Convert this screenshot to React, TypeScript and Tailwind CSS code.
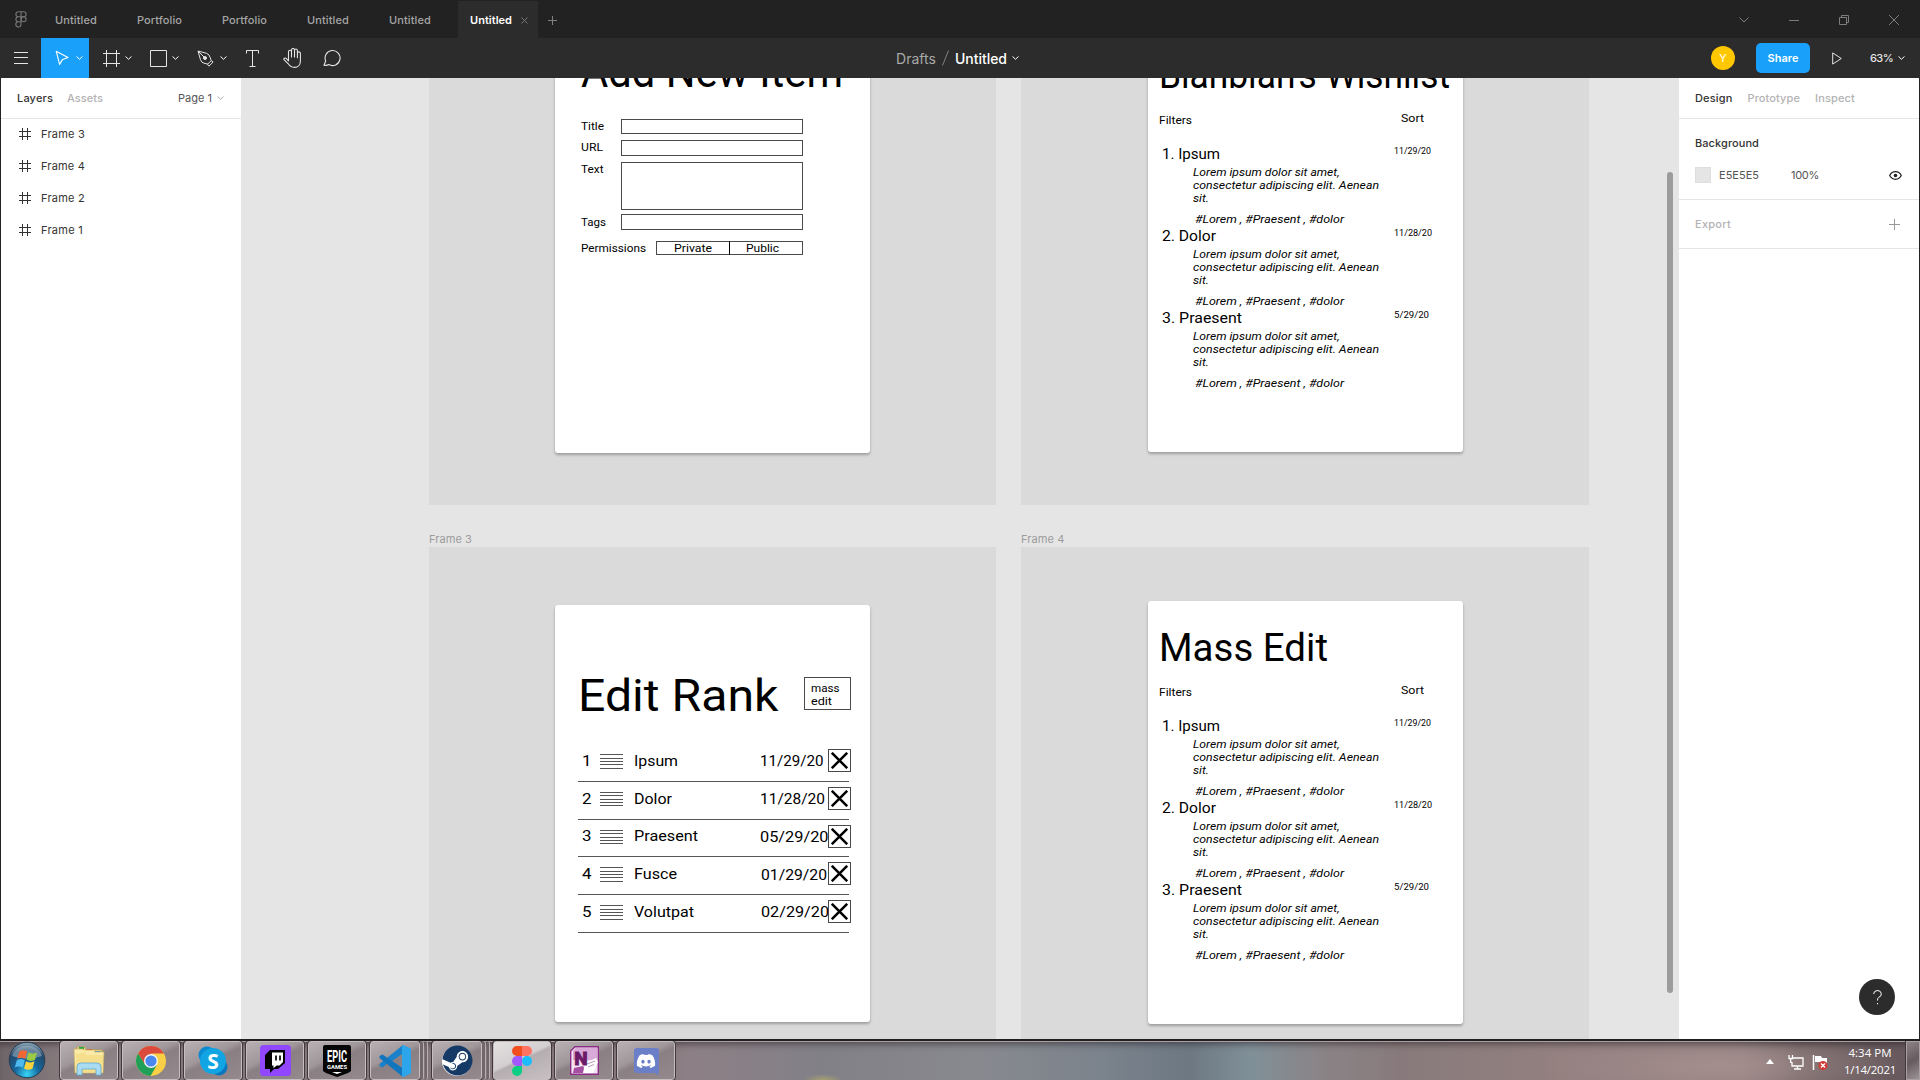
import React, { useLayoutEffect, useRef } from "react";
import { FaDiscord, FaSteam } from "react-icons/fa";

/** Text whose tracking is adjusted so that it spans exactly `w` pixels. */
function Fit({ w, className = "", children }: { w: number; className?: string; children: string }) {
  const ref = useRef<HTMLSpanElement>(null);
  useLayoutEffect(() => {
    const apply = () => {
      const el = ref.current;
      if (!el) return;
      el.style.letterSpacing = "0px";
      const natural = el.getBoundingClientRect().width;
      el.style.letterSpacing = `${(w - natural) / children.length}px`;
    };
    apply();
    document.fonts?.ready.then(apply);
  }, [w, children]);
  return (
    <span ref={ref} className={`inline-block whitespace-pre ${className}`}>
      {children}
    </span>
  );
}

/** Text whose glyphs are widened or narrowed so that it spans exactly `w` pixels. */
function Stretch({ w, children }: { w: number; children: string }) {
  const ref = useRef<HTMLSpanElement>(null);
  useLayoutEffect(() => {
    const apply = () => {
      const el = ref.current;
      if (!el) return;
      el.style.transform = "none";
      el.style.transform = `scaleX(${w / el.getBoundingClientRect().width})`;
    };
    apply();
    document.fonts?.ready.then(apply);
  }, [w, children]);
  return (
    <span ref={ref} className="inline-block origin-left whitespace-pre align-top">
      {children}
    </span>
  );
}

const CANVAS_X = 241;
const CANVAS_Y = 78;

/** A text node on the free canvas, placed by its left edge and baseline. */
function Node({ x, y, w, size, italic, children }: { x: number; y: number; w: number; size: number; italic?: boolean; children: string }) {
  return (
    <div
      className={`absolute font-['Roboto',sans-serif] leading-none text-black ${italic ? "italic" : ""}`}
      style={{ left: x - CANVAS_X, top: y - CANVAS_Y - size * 0.841 + 0.5, fontSize: size }}
    >
      <Stretch w={w}>{children}</Stretch>
    </div>
  );
}

function Box({ x, y, w, h, className = "" }: { x: number; y: number; w: number; h: number; className?: string }) {
  return <div className={`absolute ${className}`} style={{ left: x - CANVAS_X, top: y - CANVAS_Y, width: w, height: h }} />;
}

const CARD = "rounded-[3px] bg-white shadow-[0_2px_3px_rgba(0,0,0,0.28)]";
const OUTLINE = "border border-[#4a4a4a]";

const items = [
  { title: "1. Ipsum", tw: 58, date: "11/29/20", dw: 37 },
  { title: "2. Dolor", tw: 54, date: "11/28/20", dw: 38 },
  { title: "3. Praesent", tw: 80, date: "5/29/20", dw: 35 },
];

function Wishlist({ dy, heading, hw, hy }: { dy: number; heading: string; hw: number; hy: number }) {
  return (
    <>
      <Node x={1158.5} y={hy} w={hw} size={38}>{heading}</Node>
      <Node x={1159} y={124 + dy} w={33} size={11.5}>Filters</Node>
      <Node x={1400.5} y={121.7 + dy} w={23} size={11.5}>Sort</Node>
      {items.map((it, i) => {
        const o = dy + i * 82;
        return (
          <React.Fragment key={it.title}>
            <Node x={1161.5} y={159.5 + o} w={it.tw} size={15}>{it.title}</Node>
            <Node x={1393.5} y={153.7 + o} w={it.dw} size={8.3}>{it.date}</Node>
            <Node x={1192.5} y={176 + o} w={146.5} size={11.5} italic>Lorem ipsum dolor sit amet,</Node>
            <Node x={1192.5} y={189.3 + o} w={186} size={11.5} italic>consectetur adipiscing elit. Aenean</Node>
            <Node x={1192.5} y={202.6 + o} w={16} size={11.5} italic>sit.</Node>
            <Node x={1194.5} y={223.2 + o} w={149} size={11.5} italic>#Lorem , #Praesent , #dolor</Node>
          </React.Fragment>
        );
      })}
    </>
  );
}

const fields = [
  { label: "Title", w: 23, y: 130 },
  { label: "URL", w: 22, y: 151.3 },
  { label: "Text", w: 22.5, y: 173 },
  { label: "Tags", w: 25, y: 225.7 },
  { label: "Permissions", w: 65, y: 252 },
];

const ranks = [
  { name: "Ipsum", w: 44, date: "11/29/20", dx: 760, dw: 63.5 },
  { name: "Dolor", w: 38, date: "11/28/20", dx: 760, dw: 65 },
  { name: "Praesent", w: 64, date: "05/29/20", dx: 759.5, dw: 68.5 },
  { name: "Fusce", w: 43, date: "01/29/20", dx: 760.7, dw: 66 },
  { name: "Volutpat", w: 60, date: "02/29/20", dx: 760.7, dw: 68 },
];

function Canvas() {
  return (
    <main className="relative h-full w-[1438px] shrink-0 overflow-hidden bg-[#e5e5e5]">
      <Box x={429} y={60} w={567} h={445} className="bg-[#dadada]" />
      <Box x={1021} y={60} w={568} h={445} className="bg-[#dadada]" />
      <Box x={429} y={547} w={567} h={520} className="bg-[#dadada]" />
      <Box x={1021} y={547} w={568} h={520} className="bg-[#dadada]" />
      <div className="absolute left-[188px] top-[453px] font-['Inter',sans-serif] text-[11px] leading-4 text-[#9c9c9c]"><Fit w={43}>Frame 3</Fit></div>
      <div className="absolute left-[780px] top-[453px] font-['Inter',sans-serif] text-[11px] leading-4 text-[#9c9c9c]"><Fit w={43.5}>Frame 4</Fit></div>

      <Box x={555} y={40} w={315} h={413} className={CARD} />
      <Node x={581} y={86.7} w={262} size={45}>Add New Item</Node>
      {fields.map((f) => <Node key={f.label} x={581} y={f.y} w={f.w} size={11.5}>{f.label}</Node>)}
      <Box x={621} y={119} w={182} h={15} className={OUTLINE} />
      <Box x={621} y={140} w={182} h={16} className={OUTLINE} />
      <Box x={621} y={162} w={182} h={48} className={OUTLINE} />
      <Box x={621} y={214} w={182} h={16} className={OUTLINE} />
      <Box x={656} y={241} w={74} h={14} className={OUTLINE} />
      <Box x={729} y={241} w={74} h={14} className="border border-[#4a4a4a] border-l-black" />
      <Node x={673.5} y={252} w={38} size={11.5}>Private</Node>
      <Node x={745.5} y={252} w={33} size={11.5}>Public</Node>

      <Box x={1148} y={40} w={315} h={412} className={CARD} />
      <Wishlist dy={0} heading="Blahblah's Wishlist" hw={291} hy={87.3} />

      <Box x={555} y={605} w={315} h={417} className={CARD} />
      <Node x={577.5} y={710} w={200.5} size={45}>Edit Rank</Node>
      <Box x={804} y={677} w={47} h={33} className={OUTLINE} />
      <Node x={810.5} y={691.7} w={28.5} size={11.5}>mass</Node>
      <Node x={810.5} y={705} w={21} size={11.5}>edit</Node>
      {ranks.map((r, i) => {
        const o = i * 37.8;
        return (
          <React.Fragment key={r.name}>
            <Node x={582.3} y={766 + o} w={9.5} size={15}>{String(i + 1)}</Node>
            {[754, 757.5, 761, 764, 767.5].map((y) => (
              <Box key={y} x={600} y={Math.round(y + o)} w={23} h={1} className="bg-[#555]" />
            ))}
            <Node x={633.5} y={766 + o} w={r.w} size={15}>{r.name}</Node>
            <Node x={r.dx} y={766.3 + o} w={r.dw} size={15}>{r.date}</Node>
            <Box x={828} y={Math.round(749 + o)} w={23} h={23} className={OUTLINE} />
            <svg className="absolute h-[17px] w-[17px]" style={{ left: 831 - CANVAS_X, top: Math.round(752 + o) - CANVAS_Y }} viewBox="0 0 17 17" stroke="#000" strokeWidth="2.5">
              <path d="M0.8 0.8 16.2 16.2M16.2 0.8 0.8 16.2" />
            </svg>
            <Box x={578} y={Math.round(780.8 + o)} w={271} h={1} className="bg-[#555]" />
          </React.Fragment>
        );
      })}

      <Box x={1148} y={601} w={315} h={423} className={CARD} />
      <Wishlist dy={572} heading="Mass Edit" hw={169} hy={660.3} />

      <Box x={1667} y={172} w={6} h={821} className="rounded-full bg-[#9c9c9c]" />
    </main>
  );
}

function Chevron({ className = "" }: { className?: string }) {
  return (
    <svg className={`h-[4px] w-[7px] shrink-0 ${className}`} viewBox="0 0 7 4" fill="none" stroke="currentColor">
      <path d="M.5.4 3.5 3.3 6.5.4" />
    </svg>
  );
}

const tabs = [
  { label: "Untitled", w: 42, ml: "ml-[28px]" },
  { label: "Portfolio", w: 45, ml: "ml-[40px]" },
  { label: "Portfolio", w: 45, ml: "ml-[40px]" },
  { label: "Untitled", w: 42, ml: "ml-[40px]" },
  { label: "Untitled", w: 42, ml: "ml-[40px]" },
];

function TabBar() {
  return (
    <div className="flex h-[38px] items-center bg-[#222] pl-[15px] text-[11px] font-medium text-[#a5a5a5]">
      <svg className="h-[17px] w-[12px]" viewBox="0 0 12 17" fill="none" stroke="#777" strokeWidth="1.1">
        <path d="M6 .8H3.4a2.5 2.5 0 0 0 0 5H6zM6 .8h2.6a2.5 2.5 0 0 1 0 5H6M6 5.8H3.4a2.5 2.5 0 0 0 0 5H6zM6 10.8H3.4A2.6 2.6 0 1 0 6 13.5z" />
        <circle cx="8.6" cy="8.3" r="2.5" />
      </svg>
      {tabs.map((t, i) => (
        <div key={i} className={`flex pt-[3px] ${t.ml}`}><Fit w={t.w}>{t.label}</Fit></div>
      ))}
      <div className="ml-[27px] mt-px flex h-[37px] w-[80px] items-center bg-[#2c2c2c] pl-[12px] pt-[2px] font-semibold text-white">
        <Fit w={42}>Untitled</Fit>
        <svg className="ml-[9px] h-[7px] w-[7px]" viewBox="0 0 7 7" stroke="#777"><path d="M.5.5 6.5 6.5M6.5.5.5 6.5" /></svg>
      </div>
      <svg className="ml-[10px] mt-[3px] h-[9px] w-[9px]" viewBox="0 0 9 9" stroke="#808080"><path d="M4.5 0v9M0 4.5h9" /></svg>
      <div className="ml-auto flex items-center pr-[21px] pt-[2px] text-[#7d7d7d]">
        <svg className="h-[6px] w-[10px]" viewBox="0 0 10 6" fill="none" stroke="currentColor"><path d="M.5.5 5 5 9.5.5" /></svg>
        <svg className="ml-[40px] h-[3px] w-[10px]" viewBox="0 0 10 3" stroke="currentColor"><path d="M0 1.5h10" /></svg>
        <svg className="ml-[40px] h-[10px] w-[10px]" viewBox="0 0 10 10" fill="none" stroke="currentColor"><path d="M.5 2.5h7v7h-7zM2.5 2.5v-2h7v7h-2" /></svg>
        <svg className="ml-[40px] h-[10px] w-[10px]" viewBox="0 0 10 10" stroke="currentColor"><path d="M0 0 10 10M10 0 0 10" /></svg>
      </div>
    </div>
  );
}

function Toolbar() {
  return (
    <div className="flex h-10 items-center bg-[#2c2c2c] text-white">
      <svg className="ml-[14px] h-[12px] w-[14px]" viewBox="0 0 14 12" stroke="#e5e5e5"><path d="M0 .5h14M0 5.5h14M0 11.5h14" /></svg>
      <div className="ml-[13px] flex h-full w-[48px] items-center bg-[#18a0fb] pl-[14px]">
        <svg className="h-[16px] w-[14px]" viewBox="0 0 14 16" fill="none" stroke="#fff" strokeWidth="1.1" strokeLinejoin="round"><path d="M1.2 1.2 13 7.6 7.6 9.4 4.6 14.4z" /></svg>
        <Chevron className="ml-[7px]" />
      </div>
      <svg className="ml-[14px] h-[17px] w-[17px]" viewBox="0 0 17 17" stroke="#e5e5e5"><path d="M3.5 0v17M13.5 0v17M0 3.5h17M0 13.5h17" /></svg>
      <Chevron className="ml-[5px]" />
      <svg className="ml-[18px] h-[17px] w-[17px]" viewBox="0 0 17 17" fill="none" stroke="#e5e5e5"><path d="M.5.5h16v16H.5z" /></svg>
      <Chevron className="ml-[5px]" />
      <svg className="ml-[18px] h-[17px] w-[17px]" viewBox="0 0 17 17" fill="none" stroke="#e5e5e5" strokeLinejoin="round">
        <path d="M1 1 3.5 9.8Q4.3 13 8 13.5L10.8 14 14.2 10.6 13.3 7.8Q12.4 4.2 9.5 3.3zM1 1l6 6M10.4 14.2l1.5 2 4.2-4.2-1.9-1.5" /><circle cx="8" cy="8" r="1.5" fill="#e5e5e5" />
      </svg>
      <Chevron className="ml-[6px]" />
      <svg className="ml-[19px] h-[17px] w-[13px]" viewBox="0 0 13 17" fill="none" stroke="#e5e5e5"><path d="M.5 3.5v-3h12v3M6.5.5v16M3.5 16.5h6" /></svg>
      <svg className="ml-[24px] h-[20px] w-[19px]" viewBox="0 0 19 20" fill="none" stroke="#e5e5e5" strokeWidth="1.1" strokeLinejoin="round" strokeLinecap="round">
        <path d="M5.5 11V3.8a1.5 1.5 0 0 1 3 0V9 2a1.5 1.5 0 0 1 3 0v7-6.5a1.4 1.4 0 0 1 2.9 0V9.8 5.4a1.5 1.5 0 0 1 3 0V13c0 3.8-2.4 6.4-6 6.4-3 0-4.6-1.2-6.1-3.6L1 11.7c-.6-1.4 1-2.3 2.2-1.3L5.5 13z" />
      </svg>
      <svg className="ml-[21px] h-[18px] w-[18px]" viewBox="0 0 18 18" fill="none" stroke="#e5e5e5" strokeWidth="1.1" strokeLinejoin="round"><path d="M1 16.2 2.7 12A7.5 7.5 0 1 1 5.8 15.5Q3.5 16.8 1 16.2z" /></svg>

      <div className="ml-[555px] flex items-center text-[14px]">
        <Fit w={40} className="text-[#a8a8a8]">Drafts</Fit>
        <svg className="ml-[6px] h-[16px] w-[7px]" viewBox="0 0 7 16" stroke="#808080"><path d="M.5 15.5 6.5.5" /></svg>
        <Fit w={52} className="ml-[6px] font-medium">Untitled</Fit>
        <Chevron className="ml-[5px]" />
      </div>
      <div className="ml-auto flex items-center pr-[15px]">
        <div className="flex h-6 w-6 items-center justify-center rounded-full bg-[#ffc700] text-[11px]">Y</div>
        <div className="ml-[21px] flex h-[30px] w-[54px] items-center justify-center rounded-[5px] bg-[#18a0fb] text-[11px] font-semibold"><Fit w={31}>Share</Fit></div>
        <svg className="ml-[22px] h-[13px] w-[10px]" viewBox="0 0 10 13" fill="none" stroke="#e5e5e5" strokeLinejoin="round"><path d="M.7.9 9.3 6.5.7 12.1z" /></svg>
        <Fit w={23} className="ml-[28px] text-[11px] font-medium text-[#e5e5e5]">63%</Fit>
        <Chevron className="ml-[5px]" />
      </div>
    </div>
  );
}

function LeftPanel() {
  return (
    <aside className="h-full w-[240px] shrink-0 bg-white text-[11px] text-[#333]">
      <div className="flex h-[41px] items-center border-b border-[#e5e5e5] pl-[16px]">
        <Fit w={36} className="font-medium">Layers</Fit>
        <Fit w={36} className="ml-[14px] font-medium text-[#b3b3b3]">Assets</Fit>
        <Fit w={34} className="ml-[75px] text-[#555]">Page 1</Fit>
        <Chevron className="ml-[5px] text-[#aaa]" />
      </div>
      {["Frame 3", "Frame 4", "Frame 2", "Frame 1"].map((n, i) => (
        <div key={n} className={`flex h-8 items-center pl-[18px] ${i === 0 ? "-mt-px" : ""}`}>
          <svg className="h-[12px] w-[12px]" viewBox="0 0 12 12" stroke="#333"><path d="M3.5 0v12M8.5 0v12M0 3.5h12M0 8.5h12" /></svg>
          <Fit w={i === 3 ? 42 : 44} className="ml-[10px]">{n}</Fit>
        </div>
      ))}
    </aside>
  );
}

function RightPanel() {
  return (
    <aside className="relative h-full w-[240px] shrink-0 bg-white text-[11px] text-[#333]">
      <div className="flex h-[41px] items-center border-b border-[#e5e5e5] pl-[16px] font-medium">
        <Fit w={37.5}>Design</Fit>
        <Fit w={52.5} className="ml-[15px] text-[#b3b3b3]">Prototype</Fit>
        <Fit w={40} className="ml-[15px] text-[#b3b3b3]">Inspect</Fit>
      </div>
      <div className="flex h-[81px] flex-col border-b border-[#e5e5e5] pl-[16px] pr-[17px]">
        <div className="flex h-[48px] items-center"><Fit w={64} className="font-medium">Background</Fit></div>
        <div className="flex h-4 items-center text-[#555]">
          <div className="h-4 w-4 border border-[#dedede] bg-[#e5e5e5]" />
          <Fit w={40} className="ml-[8px]">E5E5E5</Fit>
          <Fit w={28} className="ml-[32px]">100%</Fit>
          <svg className="ml-auto h-[9px] w-[13px]" viewBox="0 0 13 9" fill="none" stroke="#222" strokeWidth="1.2"><path d="M.7 4.5C2 2 4 .7 6.5.7S11 2 12.3 4.5C11 7 9 8.3 6.5 8.3S2 7 .7 4.5z" /><circle cx="6.5" cy="4.5" r="1.8" fill="#222" stroke="none" /></svg>
        </div>
      </div>
      <div className="flex h-[49px] items-center justify-between border-b border-[#e5e5e5] pl-[16px] pr-[19px] font-medium text-[#b3b3b3]">
        <Fit w={36}>Export</Fit>
        <svg className="h-[11px] w-[11px]" viewBox="0 0 11 11" stroke="#999"><path d="M5.5 0v11M0 5.5h11" /></svg>
      </div>
      <div className="absolute left-[180px] top-[901px] flex h-9 w-9 items-center justify-center rounded-full bg-[#2c2c2c]">
        <svg className="h-[15px] w-[9px]" viewBox="0 0 9 15" fill="none" stroke="#fff"><path d="M.7 4A3.8 3.5 0 1 1 5.8 7.3Q4.5 8 4.5 10.500M4.5 13v1.3" /></svg>
      </div>
    </aside>
  );
}

const WindowsOrb = () => (
  <svg className="h-[38px] w-[38px]" viewBox="0 0 38 38">
    <defs>
      <radialGradient id="orb" cx="50%" cy="90%" r="85%"><stop offset="0" stopColor="#38d6f8" /><stop offset=".4" stopColor="#15679c" /><stop offset=".8" stopColor="#23486a" /><stop offset="1" stopColor="#7f9aac" /></radialGradient>
    </defs>
    <circle cx="19" cy="19" r="17.8" fill="url(#orb)" stroke="#273c50" />
    <path d="M4 15a15.5 14 0 0 1 30 0Q19 20 4 15z" fill="#c5d6e0" opacity=".42" />
    <path d="M11.2 10.5q4-2.6 8 .1l-2 7.4q-4-2.6-8-.2z" fill="#ee6734" />
    <path d="M20.5 11.5q4 2.3 8.5 0l-2 7.2q-4.5 2.5-8.5-.1z" fill="#9acb42" />
    <path d="M8.8 19.3q4-2.5 8 .2l-2 7.2q-4-2.5-8-.1z" fill="#4db9ee" />
    <path d="M18 20.2q4.2 2.4 8.5.1l-2 7.2q-4.3 2.4-8.5-.1z" fill="#fbd23c" />
  </svg>
);

const Folder = () => (
  <svg className="h-[30px] w-[34px]" viewBox="0 0 34 30">
    <path d="M5 1h8l1 3h16v20H5z" fill="#f3dd85" stroke="#bd9b44" strokeWidth=".7" />
    <path d="M7 1h5v2H7z" fill="#28a745" /><path d="M15 3h5v2h-5z" fill="#d3523d" /><path d="M23 5h6v2h-6z" fill="#4c9cdb" />
    <path d="M12 4h10l1 2h9l-1 21H3L2 3h9z" fill="#fbeaa8" stroke="#cdb05e" strokeWidth=".7" />
    <path d="M13 6l1 3h17v17H4V8z" fill="#f5df8c" />
    <path d="M5 29V21q0-4 4-4h16q4 0 4 4v8h-5v-6H10v6z" fill="#a9dcf2" stroke="#61a8cf" strokeWidth=".8" />
  </svg>
);

const Chrome = () => (
  <svg className="h-[30px] w-[30px]" viewBox="0 0 30 30">
    <circle cx="15" cy="15" r="15" fill="#f9cf46" />
    <path d="M2 7.5A15 15 0 0 1 28 7.5H15L9 18.5z" fill="#db4a3b" />
    <path d="M2 7.5A15 15 0 0 0 14.5 30L21 18.7 9 18.5z" fill="#1f9f58" />
    <circle cx="15" cy="15" r="7" fill="#f3f3f3" /><circle cx="15" cy="15" r="5.6" fill="#4a87ee" />
  </svg>
);

const Skype = () => (
  <svg className="h-[30px] w-[30px]" viewBox="0 0 30 30">
    <circle cx="9" cy="9" r="8.5" fill="#0a8ad0" /><circle cx="21" cy="21" r="8.5" fill="#0877bf" /><circle cx="15" cy="15" r="13" fill="#12a5e4" />
    <text x="15" y="22.5" textAnchor="middle" fontSize="21" fontWeight="700" fill="#fff" fontFamily="Open Sans, sans-serif">S</text>
  </svg>
);

const Twitch = () => (
  <svg className="h-[31px] w-[31px]" viewBox="0 0 31 31">
    <rect width="31" height="31" rx="3.5" fill="#9147ff" />
    <path d="M10 5h15v13l-7 6h-4l-4 4v-4H5V10z" fill="#000" /><path d="M12 7.5h11v9.5l-3.5 3.5h-3l-3 2.8v-2.8H12z" fill="#fff" />
    <path d="M16 10.5v5M20 10.5v5" stroke="#000" strokeWidth="1.7" />
  </svg>
);

const Epic = () => (
  <svg className="h-[32px] w-[28px]" viewBox="0 0 28 32">
    <path d="M2 0h24q2 0 2 2v24l-3 2-11 4-11-4-3-2V2q0-2 2-2z" fill="#050505" />
    <text x="14" y="17" textAnchor="middle" fontSize="17" fontWeight="700" fill="#fff" textLength="20" lengthAdjust="spacingAndGlyphs" fontFamily="Roboto, sans-serif">EPIC</text>
    <text x="14" y="23.5" textAnchor="middle" fontSize="5.5" fontWeight="700" fill="#fff" textLength="20" lengthAdjust="spacingAndGlyphs" fontFamily="Roboto, sans-serif">GAMES</text>
    <path d="M9 27h10l-5 2z" fill="#fff" />
  </svg>
);

const VSCode = () => (
  <svg className="h-[32px] w-[32px]" viewBox="0 0 32 32">
    <path d="M24 32 9 18l-5.5 4.5L.5 21v-2L24 0v8.5L13 16l11 7.5z" fill="#1a82ca" />
    <path d="M.5 11v2L24 32v-8.5L3.5 9.5z" fill="#1276be" />
    <path d="M24 0l8 3.5v25L24 32q-1.5 0-1-2V2q-.5-2 1-2z" fill="#2ca5ea" />
  </svg>
);

const Steam = () => (
  <div className="flex h-[30px] w-[30px] items-center justify-center rounded-full bg-white">
    <FaSteam className="h-[31px] w-[31px] shrink-0 text-[#153a66]" />
  </div>
);

const Figma = () => (
  <svg className="h-[30px] w-[20px]" viewBox="0 0 20 30">
    <path d="M10 0H5a5 5 0 0 0 0 10h5z" fill="#f24e1e" /><path d="M10 0h5a5 5 0 0 1 0 10h-5z" fill="#ff7262" />
    <path d="M10 10H5a5 5 0 0 0 0 10h5z" fill="#a259ff" /><circle cx="15" cy="15" r="5" fill="#1abcfe" /><path d="M10 20H5a5 5 0 1 0 5 5z" fill="#0acf83" />
  </svg>
);

const OneNote = () => (
  <svg className="h-[29px] w-[29px]" viewBox="0 0 29 29">
    <path d="M5 .7h23.3v27.6H.7V5z" fill="#f4e3f3" stroke="#8c2c86" strokeWidth="1.4" />
    <path d="M6 2h21v12H3V5z" fill="#d9a9d8" /><path d="M4 22l9-2 4 7H3z" fill="#a64fa2" /><path d="M15 17l11-5 2 4-5 11H13z" fill="#fff" /><path d="M17 18l8-3M18 21l6-2.5" stroke="#b99bb8" />
    <text x="11" y="19" textAnchor="middle" fontSize="19" fontWeight="900" fill="#6b1b68" stroke="#6b1b68" strokeWidth=".8" fontFamily="Roboto, sans-serif">N</text>
  </svg>
);

const Discord = () => (
  <div className="relative flex h-[25px] w-[25px] items-center justify-center rounded-[3px] bg-[#6b7fc8]">
    <div className="absolute -bottom-[3px] right-0 h-[8px] w-[8px] bg-[#6b7fc8] [clip-path:polygon(0_0,100%_0,100%_100%)]" />
    <FaDiscord className="h-[20px] w-[20px] text-white" />
  </div>
);

const apps = [
  { icon: <Folder />, cls: "ml-[14px] w-[58px]" },
  { icon: <Chrome />, cls: "ml-[4px] w-[58px]" },
  { icon: <Skype />, cls: "ml-[4px] w-[58px]" },
  { icon: <Twitch />, cls: "ml-[4px] w-[58px]" },
  { icon: <Epic />, cls: "ml-[4px] w-[58px]" },
  { icon: <VSCode />, cls: "ml-[4px] w-[50px]", stack: true },
  { icon: <Steam />, cls: "ml-[4px] w-[50px]", stack: true },
  { icon: <Figma />, cls: "ml-[3px] w-[58px]", active: true },
  { icon: <OneNote />, cls: "ml-[4px] w-[58px]" },
  { icon: <Discord />, cls: "ml-[4px] w-[58px]" },
];

function Taskbar() {
  return (
    <footer className="flex h-[41px] items-start overflow-hidden border-t-2 border-[#231f21] bg-[radial-gradient(ellipse_20px_6px_at_823px_39px,#a5a070,transparent),radial-gradient(ellipse_180px_40px_at_1720px_25px,#a58f8d,transparent),linear-gradient(90deg,#6e6568_0px,#85797c_60px,#847579_650px,#8d8086_690px,#828087_820px,#88898f_980px,#7b838c_1100px,#6d7883_1190px,#809098_1250px,#8a8487_1320px,#887a7c_1400px,#93807f_1560px,#8a7b7c_1740px,#6d5f62_1800px,#66585c_1920px)] shadow-[inset_0_1px_0_#a79fa2,inset_0_8px_7px_-5px_rgba(40,32,36,0.6)]">
      <div className="ml-[8px]"><WindowsOrb /></div>
      {apps.map((a, i) => (
        <React.Fragment key={i}>
          <div
            className={`flex h-[39px] shrink-0 items-center justify-center rounded-[3px] border border-[#c5bdc0] outline outline-1 outline-[#41383c] ${a.cls} ${
              a.active
                ? "bg-[linear-gradient(155deg,#e4e1e1_0%,#d3cfd0_45%,#b5aeb0_50%,#c7c1c3_100%)]"
                : "bg-[linear-gradient(155deg,#b8b0b3_0%,#a0979a_40%,#8a7f82_50%,#94898c_100%)]"
            }`}
          >
            {a.icon}
          </div>
          {a.stack && (
            <div className="flex h-[39px] shrink-0 gap-px">
              <div className="w-[4px] rounded-r-[3px] border-r border-[#b9b0b3] bg-[#71676b]" />
              <div className="w-[3px] rounded-r-[3px] border-r border-[#b9b0b3] bg-[#71676b]" />
            </div>
          )}
        </React.Fragment>
      ))}
      <div className="ml-auto flex h-[39px] items-center">
        <svg className="mt-[2px] h-[5px] w-[8px]" viewBox="0 0 8 5"><path d="M4 0 8 5H0z" fill="#fff" /></svg>
        <svg className="ml-[14px] mt-[3px] h-[15px] w-[16px]" viewBox="0 0 16 15" fill="none" stroke="#fff" strokeWidth="1.3">
          <path d="M5 3h10v8H4V7M6 14h7M9.5 11v3M1 0v3.5h3.5V0M2.7 3.5V8" />
        </svg>
        <svg className="ml-[8px] mt-[3px] h-[15px] w-[16px]" viewBox="0 0 16 15">
          <path d="M1.5 0v15" stroke="#fff" strokeWidth="1.5" /><path d="M3 1h6l1 2h5v6H9L8 7H3z" fill="#fff" />
          <circle cx="11" cy="10.5" r="4.5" fill="#d13b35" /><path d="M9 8.5l4 4M13 8.5l-4 4" stroke="#fff" strokeWidth="1.4" />
        </svg>
        <div className="ml-[15px] flex w-[54px] flex-col items-center font-['Open_Sans',sans-serif] text-[11.5px] leading-[17px] text-white">
          <Fit w={43}>4:34 PM</Fit>
          <Fit w={52}>1/14/2021</Fit>
        </div>
        <div className="ml-[9px] h-[39px] w-[14px] border border-[#aaa0a3] bg-[linear-gradient(150deg,#8d8386,#665b5f_50%,#9c9396)] outline outline-1 outline-[#41383c]" />
      </div>
    </footer>
  );
}

export default function App() {
  return (
    <div className="flex h-[1080px] w-[1920px] flex-col overflow-hidden bg-[#222] font-['Inter',sans-serif]">
      <TabBar />
      <Toolbar />
      <div className="flex h-[961px] border-x border-[#222]">
        <LeftPanel />
        <Canvas />
        <RightPanel />
      </div>
      <Taskbar />
    </div>
  );
}
